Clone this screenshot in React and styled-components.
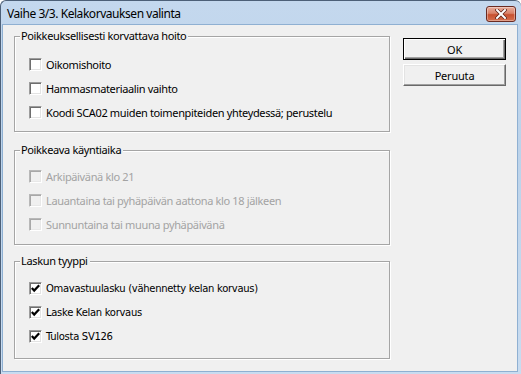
import React from 'react'
import styled, {createGlobalStyle, css} from 'styled-components'

const GlobalStyle = createGlobalStyle`
    html, body {
        margin: 0;
        padding: 0;
        background: #ffffff;
    }
    * {
        box-sizing: border-box;
    }
`

const Window = styled.div`
    width: 521px;
    height: 374px;
    display: flex;
    flex-direction: column;
    border: 1px solid #4d6078;
    border-bottom: none;
    border-right: none;
    border-radius: 6px 6px 0 0;
    background: linear-gradient(180deg, #c4d8ee 0%, #bcd3ea 40%, #c9dcf0 100%);
    overflow: hidden;
`

const TitleBar = styled.div`
    height: 23px;
    flex: none;
    display: flex;
    align-items: center;
    justify-content: space-between;
    padding: 0 5px 0 6px;
`

const Title = styled.span`
    font-family: "Noto Sans", "Open Sans", sans-serif;
    font-size: 12px;
    letter-spacing: -0.45px;
    color: #000;
    margin-top: 1px;
`

const CloseButton = styled.div`
    width: 30px;
    height: 16px;
    margin-top: 2px;
    border: 1px solid #6b2b22;
    border-radius: 3px;
    background: linear-gradient(180deg, #e8ad9c 0%, #da8268 45%, #c8502f 55%, #d4704f 100%);
    display: flex;
    align-items: center;
    justify-content: center;
    box-shadow: inset 0 0 0 1px rgba(255, 255, 255, 0.35);
`

const Client = styled.div`
    flex: 1;
    margin: 0 3px 2px 1px;
    border: 1px solid #8fb0d2;
    background: #f0f0f0;
    display: flex;
    padding: 11px 0 0 11px;
    gap: 13px;
`

const LeftColumn = styled.div`
    width: 376px;
    display: flex;
    flex-direction: column;
`

const Group = styled.div`
    position: relative;
    border: 1px solid #a5a5a5;
    box-shadow: inset 1px 1px 0 #ffffff, 1px 1px 0 #ffffff;
    display: flex;
    flex-direction: column;
    padding-left: 14px;
    margin-top: ${p => p.$gap || 0}px;
    padding-top: ${p => p.$top}px;
    height: ${p => p.$height}px;
`

const Legend = styled.span`
    position: absolute;
    top: -8px;
    left: 5px;
    padding: 0 2px 0 1px;
    background: #f0f0f0;
    font-family: "Noto Sans", "Open Sans", sans-serif;
    font-size: 11px;
    letter-spacing: -0.35px;
    line-height: 14px;
    color: #000;
`

const Row = styled.label`
    height: 24px;
    display: flex;
    align-items: center;
    gap: 4px;
    font-family: ${p => p.$tahoma ? '"DejaVu Sans", Verdana, sans-serif' : '"Noto Sans", "Open Sans", sans-serif'};
    font-size: ${p => p.$tahoma ? '10px' : '11px'};
    letter-spacing: ${p => p.$tahoma ? '-0.3px' : '-0.35px'};
    color: ${p => p.$disabled ? '#a3a3a3' : '#000'};
`

const Box = styled.span`
    width: 13px;
    height: 13px;
    flex: none;
    display: flex;
    align-items: center;
    justify-content: center;
    border: 1px solid;
    border-color: #9c9c9c #ffffff #ffffff #9c9c9c;
    background: #ffffff;
    box-shadow: inset 1px 1px 0 #6e6e6e, inset -1px -1px 0 #e3e3e3;
    ${p => p.$disabled && css`
        background: #f0f0f0;
        border-color: #b8b8b8 #ffffff #ffffff #b8b8b8;
        box-shadow: inset 1px 1px 0 #a8a8a8, inset -1px -1px 0 #e8e8e8;
    `}
`

const ButtonColumn = styled.div`
    width: 103px;
    display: flex;
    flex-direction: column;
    gap: 4px;
    padding-top: 2px;
`

const Button = styled.div`
    height: 22px;
    display: flex;
    align-items: center;
    justify-content: center;
    background: #f0f0f0;
    font-family: "Noto Sans", "Open Sans", sans-serif;
    font-size: 11px;
    letter-spacing: -0.2px;
    color: #000;
    border: 1px solid;
    border-color: #ffffff #696969 #696969 #ffffff;
    box-shadow: inset -1px -1px 0 #a0a0a0, inset 1px 1px 0 #e3e3e3;
    ${p => p.$default && css`
        border: 1px solid #000;
        box-shadow: inset 1px 1px 0 #ffffff, inset -1px -1px 0 #696969, inset -2px -2px 0 #a0a0a0;
    `}
`

function Check() {
    return (
        <svg width="9" height="9" viewBox="0 0 9 9">
            <path d="M0.8 4 L3.2 6.6 L8.2 1.2" fill="none" stroke="#000" strokeWidth="2.2" />
        </svg>
    )
}

function Checkbox({label, checked, disabled, tahoma}) {
    return (
        <Row $disabled={disabled} $tahoma={tahoma}>
            <Box $disabled={disabled}>{checked && <Check />}</Box>
            <span>{label}</span>
        </Row>
    )
}

export default function App() {
    return (
        <>
            <GlobalStyle />
            <Window>
                <TitleBar>
                    <Title>Vaihe 3/3. Kelakorvauksen valinta</Title>
                    <CloseButton>
                        <svg width="12" height="10" viewBox="0 0 12 10">
                            <path d="M2 1 L10 9 M10 1 L2 9" stroke="#5a2016" strokeWidth="3.4" strokeLinecap="square" />
                            <path d="M2 1 L10 9 M10 1 L2 9" stroke="#ffffff" strokeWidth="2" strokeLinecap="square" />
                        </svg>
                    </CloseButton>
                </TitleBar>
                <Client>
                    <LeftColumn>
                        <Group $top={15} $height={96}>
                            <Legend>Poikkeuksellisesti korvattava hoito</Legend>
                            <Checkbox label="Oikomishoito" />
                            <Checkbox label="Hammasmateriaalin vaihto" />
                            <Checkbox label="Koodi SCA02 muiden toimenpiteiden yhteydessä; perustelu" />
                        </Group>
                        <Group $gap={18} $top={13} $height={95}>
                            <Legend>Poikkeava käyntiaika</Legend>
                            <Checkbox disabled label="Arkipäivänä klo 21" />
                            <Checkbox disabled label="Lauantaina tai pyhäpäivän aattona klo 18 jälkeen" />
                            <Checkbox disabled label="Sunnuntaina tai muuna pyhäpäivänä" />
                        </Group>
                        <Group $gap={16} $top={14} $height={98}>
                            <Legend>Laskun tyyppi</Legend>
                            <Checkbox tahoma checked label="Omavastuulasku (vähennetty kelan korvaus)" />
                            <Checkbox tahoma checked label="Laske Kelan korvaus" />
                            <Checkbox tahoma checked label="Tulosta SV126" />
                        </Group>
                    </LeftColumn>
                    <ButtonColumn>
                        <Button $default>OK</Button>
                        <Button>Peruuta</Button>
                    </ButtonColumn>
                </Client>
            </Window>
        </>
    )
}
